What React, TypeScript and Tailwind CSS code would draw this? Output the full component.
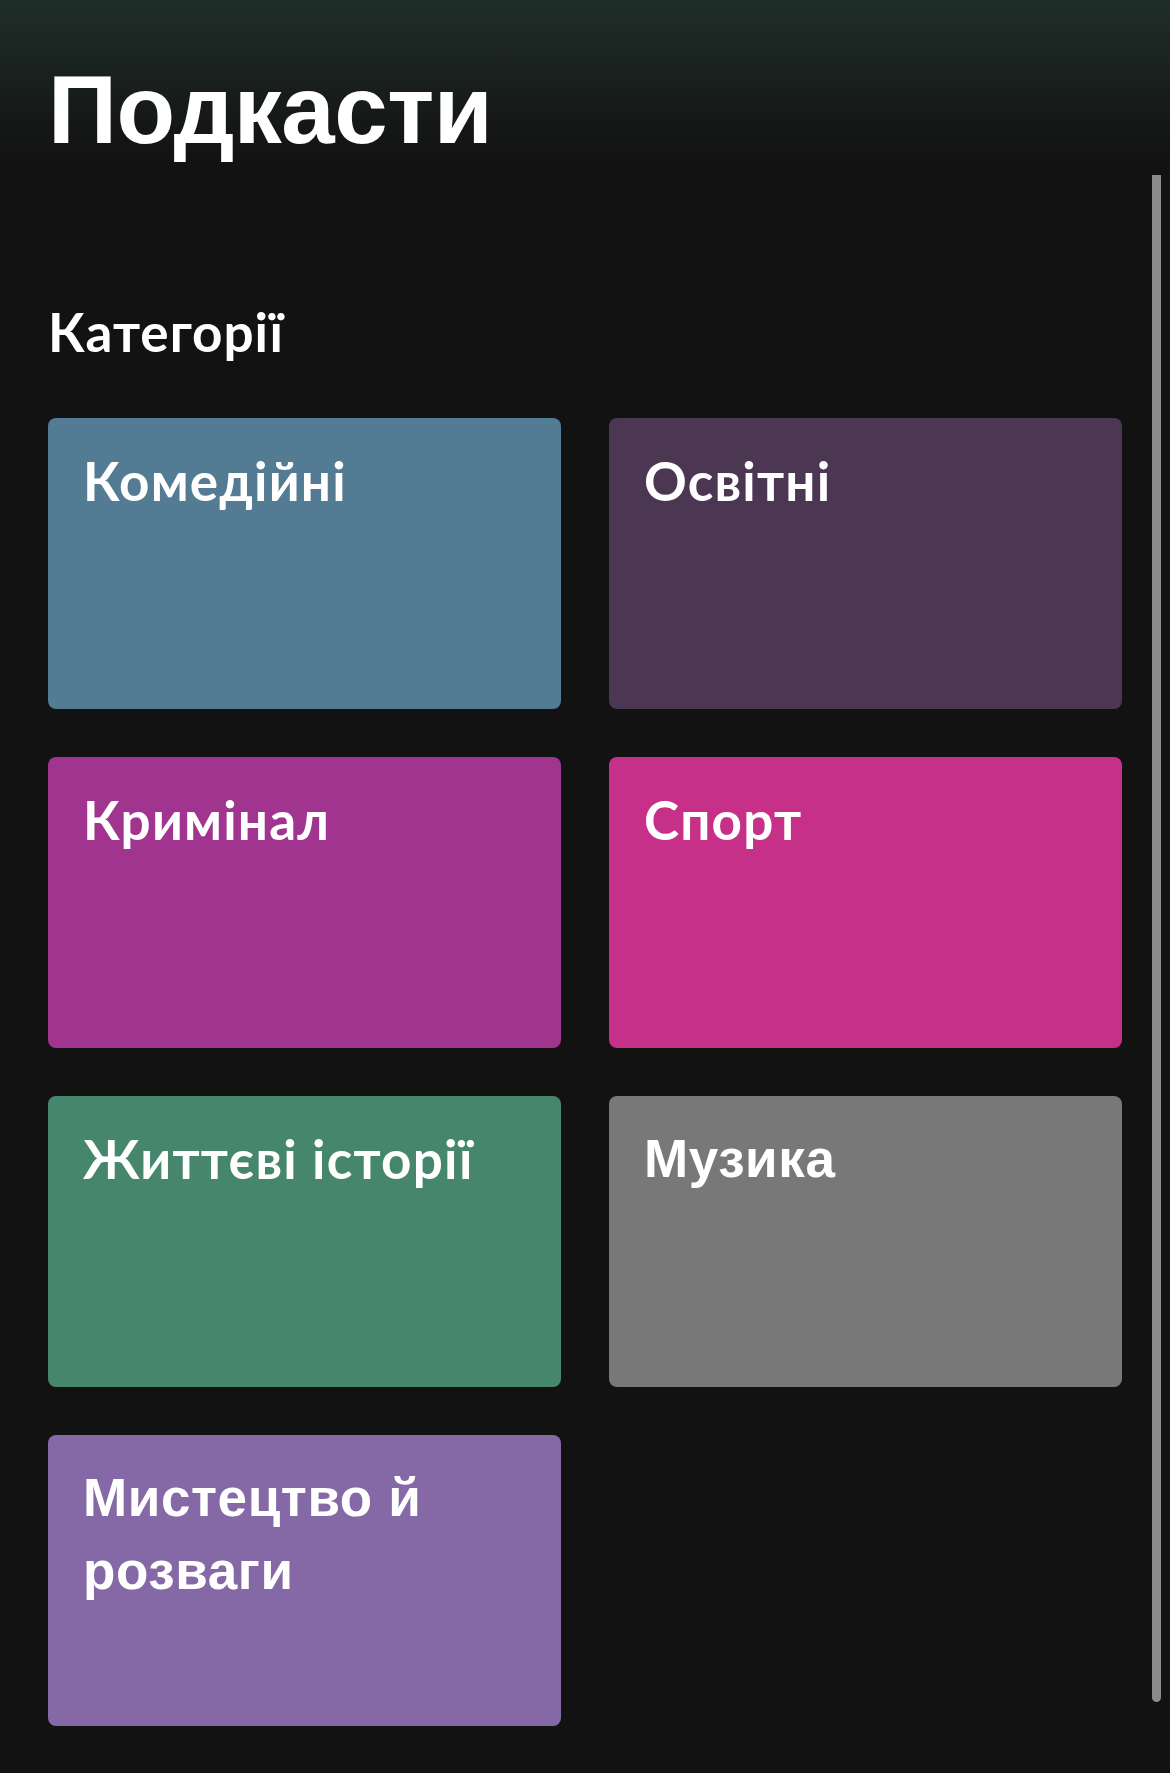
import React from 'react';

type Category = {
  title: string;
  color: string;
  fallback?: boolean;
};

const categories: Category[] = [
  { title: 'Комедійні', color: 'bg-[#547b94]' },
  { title: 'Освітні', color: 'bg-[#4b3751]' },
  { title: 'Кримінал', color: 'bg-[#a1348e]' },
  { title: 'Спорт', color: 'bg-[#c73088]' },
  { title: 'Життєві історії', color: 'bg-[#45866d]' },
  { title: 'Музика', color: 'bg-[#787878]', fallback: true },
  { title: 'Мистецтво й розваги', color: 'bg-[#8568a6]', fallback: true },
];

function CategoryCard({ category }: { category: Category }) {
  return (
    <div className={`h-[291px] rounded-lg px-[35px] pt-[26px] ${category.color}`}>
      <h3
        className={
          category.fallback
            ? "max-w-[380px] font-['Liberation_Sans',Arial,sans-serif] text-[53px] font-bold leading-[73px] tracking-[0.6px] text-white"
            : "font-['Lato','Noto_Sans',sans-serif] text-[53px] font-bold leading-[73px] tracking-[1.2px] text-white"
        }
      >
        {category.title}
      </h3>
    </div>
  );
}

export default function App() {
  return (
    <div className="relative min-h-[1773px] bg-[#121212] text-white">
      {/* Header with faded green tint */}
      <div className="h-[160px] bg-gradient-to-b from-[#1f2e2a] to-[#121212] px-12 pt-[62px]">
        <h1 className="font-['Liberation_Sans',Arial,sans-serif] text-[96px] font-bold leading-none tracking-[-0.5px]">
          Подкасти
        </h1>
      </div>

      <div className="px-12">
        <h2 className="mt-[141px] font-['Lato','Noto_Sans',sans-serif] text-[53px] font-bold leading-[62px] tracking-[1px]">
          Категорії
        </h2>

        <div className="mt-[55px] grid grid-cols-2 gap-12">
          {categories.map((c) => (
            <CategoryCard key={c.title} category={c} />
          ))}
        </div>
      </div>

      {/* Overlay scrollbar */}
      <div className="absolute top-[175px] left-[1152px] h-[1527px] w-[9px] rounded-b-full bg-[#8b8b8b]" />
    </div>
  );
}
